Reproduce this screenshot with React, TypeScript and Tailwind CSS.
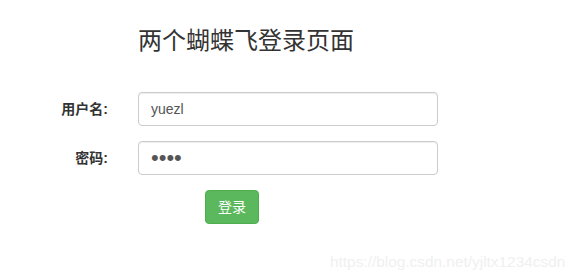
import React from "react";

const App = () => {
  return (
    <div className="relative w-[580px] h-[278px] bg-white text-[#333] font-['Liberation_Sans','Noto_Sans_CJK_SC',sans-serif] text-[14px]">
      <div className="pt-[28px] flex flex-col">
        <h3 className="ml-[138px] text-[24px] leading-[26px] h-[26px]">两个蝴蝶飞登录页面</h3>

        <form className="mt-[38px] flex flex-col gap-[15px]">
          <div className="flex items-center">
            <label className="w-[108px] text-right font-bold">用户名:</label>
            <input
              type="text"
              defaultValue="yuezl"
              className="ml-[30px] w-[300px] h-[34px] px-[12px] border border-[#ccc] rounded-[4px] text-[#555] shadow-[inset_0_1px_1px_rgba(0,0,0,0.075)] outline-none"
            />
          </div>
          <div className="flex items-center">
            <label className="w-[108px] text-right font-bold">密码:</label>
            <input
              type="password"
              defaultValue="1234"
              className="ml-[30px] w-[300px] h-[34px] px-[12px] border border-[#ccc] rounded-[4px] text-[#555] text-[22px] tracking-[0px] shadow-[inset_0_1px_1px_rgba(0,0,0,0.075)] outline-none"
            />
          </div>
          <div className="flex">
            <button
              type="button"
              className="ml-[205px] w-[54px] h-[34px] bg-[#5cb85c] border border-[#4cae4c] rounded-[4px] text-white"
            >
              登录
            </button>
          </div>
        </form>
      </div>

      <div className="absolute left-[330px] top-[250px] text-[15.4px] text-[#f0f0f0] font-['Liberation_Sans',sans-serif]">
        https://blog.csdn.net/yjltx1234csdn
      </div>
    </div>
  );
};

export default App;
